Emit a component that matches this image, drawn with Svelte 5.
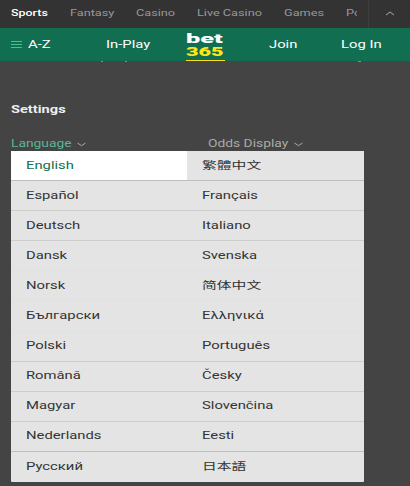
<script lang="ts">
  interface NavItem {
    label: string;
    width: number;
  }

  const products: NavItem[] = [
    { label: 'Sports', width: 59 },
    { label: 'Fantasy', width: 66 },
    { label: 'Casino', width: 61 },
    { label: 'Live Casino', width: 87 },
    { label: 'Games', width: 62 },
    { label: 'Poker', width: 11 },
  ];

  const languages: [string, string][] = [
    ['English', '繁體中文'],
    ['Español', 'Français'],
    ['Deutsch', 'Italiano'],
    ['Dansk', 'Svenska'],
    ['Norsk', '简体中文'],
    ['Български', 'Ελληνικά'],
    ['Polski', 'Português'],
    ['Română', 'Česky'],
    ['Magyar', 'Slovenčina'],
    ['Nederlands', 'Eesti'],
    ['Русский', '日本語'],
  ];

  let selected = $state('English');
</script>

<div class="page">
  <nav class="products">
    <div class="product-list">
      {#each products as item, i}
        <div class="product" class:active={i === 0} style="width: {item.width}px">
          <span class="wide">{item.label}</span>
        </div>
      {/each}
    </div>
    <div class="collapse">
      <svg width="10" height="5" viewBox="0 0 10 5"><path d="M1 4 L5 1 L9 4" /></svg>
    </div>
  </nav>

  <header class="header">
    <div class="az">
      <svg width="11" height="9" viewBox="0 0 11 9">
        <path d="M0 1.5H11M0 4.5H11M0 7.5H11" />
      </svg>
      <span class="wide">A-Z</span>
    </div>
    <div><span class="wide">In-Play</span></div>
    <div class="logo">
      <span class="logo-bet">bet</span>
      <span class="logo-365">365</span>
    </div>
    <div><span class="wide">Join</span></div>
    <div><span class="wide">Log In</span></div>
  </header>

  <main class="content">
    <!-- descenders of the line scrolled under the header -->
    <svg class="scrolled" width="388" height="1" viewBox="0 0 388 1">
      <path d="M90 .5h2M114 .5h2M347 .5h3" />
    </svg>
    <h2><span class="wide">Settings</span></h2>
    <div class="tabs">
      <div class="tab open">
        <span class="wide">Language</span>
        <svg width="9" height="5" viewBox="0 0 9 5"><path d="M.5 1 L4.5 3.7 L8.5 1" /></svg>
      </div>
      <div class="tab odds">
        <span class="wide">Odds Display</span>
        <svg width="9" height="5" viewBox="0 0 9 5"><path d="M.5 1 L4.5 3.7 L8.5 1" /></svg>
      </div>
    </div>

    <div class="languages">
      {#each languages as row}
        <div class="row">
          {#each row as name}
            <button class="language" class:selected={selected === name} onclick={() => (selected = name)}>
              <span class="wide">{name}</span>
            </button>
          {/each}
        </div>
      {/each}
    </div>
  </main>
</div>

<style>
  :global(body) { background: #444; }
  .page {
    height: 486px;
    overflow: hidden;
    background: #444;
    color: #fff;
    font-family: Roboto, "Noto Sans CJK SC", sans-serif;
    font-size: 10.5px;
  }
  svg { display: block; fill: none; stroke: #aaa; stroke-width: 1; }
  /* extended letterforms */
  .wide {
    display: inline-block;
    white-space: nowrap;
    transform: scaleX(1.41);
    transform-origin: left center;
  }
  .products {
    display: flex;
    height: 28px;
    background: #333;
    font-size: 9px;
  }
  .product-list {
    display: flex;
    box-sizing: border-box;
    width: 369px;
    padding-left: 11px;
    border-right: 1px solid #3e3e3e;
  }
  .product {
    line-height: 27px;
    color: #999;
  }
  .product:last-child { overflow: hidden; }
  .product.active { color: #fff; font-weight: 500; }
  .product.active .wide { transform: scaleX(1.38); }
  .collapse {
    display: flex;
    flex: 1;
    align-items: center;
    justify-content: center;
    padding-bottom: 2px;
  }
  .header {
    display: grid;
    grid-template-columns: 95px 80px 83px 72px 1fr;
    height: 33px;
    padding-left: 11px;
    background: #126e51;
    line-height: 33px;
  }
  .az { display: flex; align-items: center; gap: 6px; }
  .az svg { stroke: #3bc68c; }
  .logo {
    display: flex;
    flex-direction: column;
    box-sizing: border-box;
    width: 39px;
    height: 33px;
    padding-top: 5px;
    border-bottom: 1px solid #ffdf1b;
    font-weight: 900;
  }
  .logo span { align-self: flex-start; transform-origin: left center; }
  .logo-bet { font-size: 13px; line-height: 12px; transform: scaleX(1.95); }
  .logo-365 { color: #fee51b; font-size: 12px; line-height: 14px; transform: scaleX(1.8); }
  .content { padding: 0 11px; }
  .scrolled { margin-bottom: 41px; opacity: 0.7; }
  h2 {
    margin: 0;
    color: #eee;
    font-size: 10.5px;
    font-weight: 700;
    line-height: 14px;
  }
  h2 .wide { transform: scaleX(1.39); }
  .tabs {
    display: flex;
    height: 14px;
    margin-top: 20px;
    color: #aaa;
    font-size: 10px;
    line-height: 14px;
  }
  .tab {
    display: flex;
    align-items: center;
    justify-content: space-between;
    width: 75px;
  }
  .tab .wide { transform: scaleX(1.38); }
  .tab.open { color: #58b794; }
  .tab.odds { width: 95px; margin-left: 122px; }
  .languages {
    width: 353px;
    height: 331px;
    overflow: hidden;
    border-radius: 0 0 1px 1px;
    background: #e4e4e4;
  }
  .row {
    display: flex;
    box-sizing: border-box;
    height: 30.1px;
    border-bottom: 1px solid #cdcdcd;
  }
  .row:first-child, .row:nth-child(10) { border-bottom-color: #bfbfbf; }
  .row:nth-child(4), .row:nth-child(5), .row:nth-child(6) { border-bottom-color: #e1e1e1; }
  .row:last-child { border-bottom: none; }
  .language {
    width: 177px;
    padding: 0 0 0 15px;
    border: none;
    background: none;
    color: #333;
    font: inherit;
    line-height: 28px;
    text-align: left;
  }
  .language:first-child { width: 176px; }
  .language.selected { background: #fff; color: #126e51; }
</style>
